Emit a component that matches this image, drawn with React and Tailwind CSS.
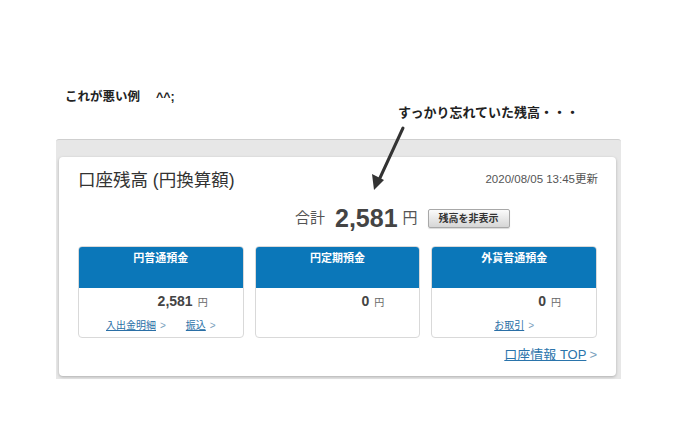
import React from "react";

const font = { fontFamily: '"Liberation Sans", "Noto Sans CJK JP", sans-serif' };

function Chevron() {
  return <span className="ml-[4px] text-[#7a9fbd] no-underline inline-block">&gt;</span>;
}

function SubCard({ title, amount, links }) {
  return (
    <div className="flex flex-col rounded-[4px] border border-[#d9d9d9] overflow-hidden bg-white h-[92px]">
      <div className="h-[41px] bg-[#0b77b9] text-white text-[11px] font-bold text-center pt-[4px] leading-[14px]">
        {title}
      </div>
      <div className="flex justify-end items-baseline pr-[35px] pt-[3px] leading-[20px]">
        <span className="text-[14px] font-bold text-[#444]">{amount}</span>
        <span className="ml-[5px] text-[10px] text-[#666]">円</span>
      </div>
      {links && (
        <div className="flex justify-center gap-[20px] mt-[6px] text-[10px] leading-[14px]">
          {links.map((l) => (
            <span key={l} className="text-[#2a6fa6]">
              <span className="underline">{l}</span>
              <Chevron />
            </span>
          ))}
        </div>
      )}
    </div>
  );
}

export default function App() {
  return (
    <div className="relative w-[683px] h-[425px] bg-white" style={font}>
      <div className="pt-[89px] pl-[65px] text-[12.5px] font-bold text-[#222] leading-[16px]">
        これが悪い例　 ^^;
      </div>
      <div className="pl-[398px] text-[13px] font-bold text-[#222] leading-[16px]">
        すっかり忘れていた残高・・・
      </div>

      <div className="mt-[18px] ml-[56px] w-[565px] bg-[#e7e7e7] border-t border-[#cfcfcf] rounded-t-[3px] pt-[17px] pl-[3px] pr-[5px] pb-[3px]">
        <div className="bg-white rounded-[4px] shadow-[0_1px_3px_rgba(0,0,0,0.25)] h-[219px] px-[19px] pt-[11px]">
          <div className="flex justify-between items-center h-[24px]">
            <span className="text-[17.5px] text-[#333]">口座残高 (円換算額)</span>
            <span className="text-[11.5px] text-[#555] mr-[-1px]">2020/08/05 13:45更新</span>
          </div>

          <div className="flex items-center h-[28px] mt-[12px] pl-[217px]">
            <span className="text-[15px] text-[#555]">合計</span>
            <span className="ml-[10px] text-[25px] font-bold text-[#444] leading-[28px]">2,581</span>
            <span className="ml-[5px] text-[15px] text-[#555]">円</span>
            <button className="ml-[10px] h-[19px] w-[82px] rounded-[2px] border border-[#a8a8a8] bg-gradient-to-b from-[#fbfbfb] to-[#d6d6d6] text-[10px] font-bold text-[#333] leading-[17px] shadow-[0_1px_1px_rgba(0,0,0,0.15)]">
              残高を非表示
            </button>
          </div>

          <div className="grid grid-cols-3 gap-[11px] mt-[14px]">
            <SubCard title="円普通預金" amount="2,581" links={["入出金明細", "振込"]} />
            <SubCard title="円定期預金" amount="0" />
            <SubCard title="外貨普通預金" amount="0" links={["お取引"]} />
          </div>

          <div className="flex justify-end mt-[9px] leading-[16px] text-[13px] text-[#2a74ab]">
            <span className="underline">口座情報 TOP</span>
            <span className="ml-[3px] text-[#7a9fbd]">&gt;</span>
          </div>
        </div>
      </div>

      <svg className="absolute left-0 top-0 pointer-events-none" width="683" height="425">
        <line x1="403" y1="128" x2="379" y2="180" stroke="#333" strokeWidth="3" strokeLinecap="round" />
        <polygon points="374,190 372,174 384,180" fill="#333" />
      </svg>
    </div>
  );
}
